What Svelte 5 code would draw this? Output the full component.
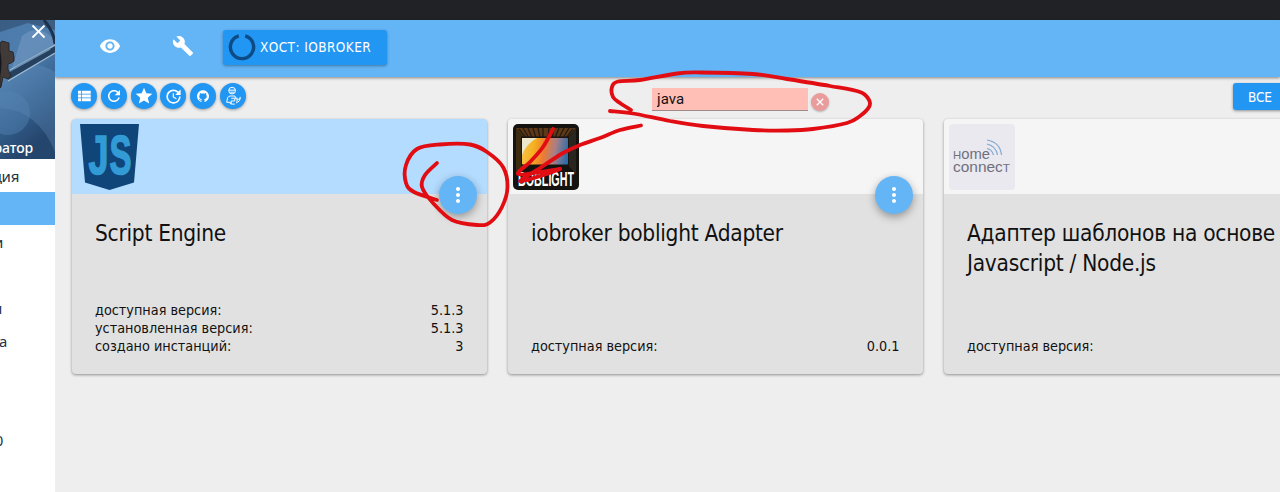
<script>
  let filter = 'java';

  const menu = [
    { label: 'ция', edge: 19 },
    { label: '', edge: 0, active: true },
    { label: 'и', edge: 3 },
    { label: '', edge: 0 },
    { label: 'и', edge: 2 },
    { label: 'а', edge: 7 },
    { label: '', edge: 0 },
    { label: '', edge: 0 },
    { label: '0', edge: 3 }
  ];

  const tools = [
    { name: 'list', size: 18, path: 'M4 14h4v-4H4v4zm0 5h4v-4H4v4zM4 9h4V5H4v4zm5 5h12v-4H9v4zm0 5h12v-4H9v4zM9 5v4h12V5H9z' },
    { name: 'refresh', size: 18, path: 'M17.65 6.35C16.2 4.9 14.21 4 12 4c-4.42 0-7.99 3.58-7.99 8s3.57 8 7.99 8c3.73 0 6.84-2.55 7.73-6h-2.08c-.82 2.33-3.04 4-5.65 4-3.31 0-6-2.69-6-6s2.69-6 6-6c1.66 0 3.14.69 4.22 1.78L13 11h7V4l-2.35 2.35z' },
    { name: 'star', size: 20, path: 'M12 17.27L18.18 21l-1.64-7.03L22 9.24l-7.19-.61L12 2 9.19 8.63 2 9.24l5.46 4.73L5.82 21z' },
    { name: 'update', size: 19, path: 'M21 10.12h-6.78l2.74-2.82c-2.73-2.7-7.15-2.8-9.88-.1-2.73 2.71-2.73 7.08 0 9.79s7.15 2.71 9.88 0C18.32 15.65 19 14.08 19 12.1h2c0 1.98-.88 4.55-2.64 6.29-3.51 3.48-9.21 3.48-12.72 0-3.5-3.47-3.53-9.11-.02-12.58s9.14-3.47 12.65 0L21 3v7.12zM12.5 8v4.25l3.5 2.08-.72 1.21L11 13V8h1.5z' },
    { name: 'github', size: 12, path: 'M12 .5C5.4.5 0 5.8 0 12.5c0 5.3 3.4 9.8 8.2 11.4.6.1.8-.3.8-.6v-2.2c-3.3.7-4-1.6-4-1.6-.6-1.4-1.4-1.8-1.4-1.8 1.5-.3 2 .8 2.6 1.5.7 1 1.8 1 2.8.6.1-.7.4-1.2.8-1.6-3-.4-5.3-1.8-5.3-5.8 0-1.3.5-2.3 1.2-3.1-.3-.9-.3-2 .1-3.1 1 0 2.3.5 3.3 1.2 1.9-.5 3.9-.5 5.8 0 1-.7 2.3-1.2 3.3-1.2.4 1.1.4 2.2.1 3.1.8.8 1.2 1.9 1.2 3.1 0 4-2.3 5.4-5.3 5.8.5.4.8 1.2.8 2.3v2.8c0 .3.2.7.8.6C20.6 22.3 24 17.8 24 12.5 24 5.800 18.6.5 12 .5z' }
  ];

  const adapters = [
    {
      logo: 'js', title: 'Script Engine', installed: true,
      info: [['доступная версия:', '5.1.3'], ['установленная версия:', '5.1.3'], ['создано инстанций:', '3']]
    },
    { logo: 'boblight', title: 'iobroker boblight Adapter', info: [['доступная версия:', '0.0.1']] },
    { logo: 'home', title: 'Адаптер шаблонов на основе Javascript / Node.js', info: [['доступная версия:', '']] }
  ];

  const strokes = [
    [[631, 110], [620, 103], [613, 97], [612, 87], [618, 81.5], [640, 80], [677, 73.5], [700, 72.5], [753, 74], [787, 79], [830, 86], [860, 92], [869, 100], [869, 107], [860, 116], [847, 123], [813, 129], [787, 130.5], [753, 130], [703, 126], [670, 121], [633, 113.5], [610, 111]],
    [[641, 125.5], [620, 130], [600, 138], [580, 145], [563, 153], [540, 168], [520, 181], [540, 176], [560, 169]],
    [[553, 129], [543, 147], [531, 161], [518, 174], [540, 172], [560, 169]],
    [[437, 163], [425, 175], [422, 187], [433, 203], [452, 220], [477, 225], [490, 222.5], [502, 207], [507.5, 187], [503, 167], [487, 152], [470, 144.5], [440, 144.5], [417, 149], [406, 165], [406, 183], [414, 192], [437, 200]]
  ];

  // Catmull-Rom spline through all points
  function curve(pts) {
    let d = `M${pts[0]}`;
    for (let i = 0; i < pts.length - 1; i++) {
      const a = pts[i - 1] || pts[i];
      const b = pts[i];
      const c = pts[i + 1];
      const e = pts[i + 2] || c;
      d += `C${b[0] + (c[0] - a[0]) / 6},${b[1] + (c[1] - a[1]) / 6} ${c[0] - (e[0] - b[0]) / 6},${c[1] - (e[1] - b[1]) / 6} ${c}`;
    }
    return d;
  }
</script>

<div class="app">
  <div class="topbar"></div>

  <div class="content">
    <aside>
      <div class="profile">
        <svg class="photo" viewBox="0 0 55 139">
          <defs>
            <linearGradient id="sky" x1="0" y1="0" x2="0.3" y2="1">
              <stop offset="0" stop-color="#4c7bab" />
              <stop offset=".35" stop-color="#4e7eae" />
              <stop offset=".7" stop-color="#35618e" />
              <stop offset="1" stop-color="#24456c" />
            </linearGradient>
          </defs>
          <rect width="55" height="139" fill="url(#sky)" />
          <path d="M0 0h55v10L28 3 0 12z" fill="#28405d" opacity=".5" />
          <path d="M22 16Q38 2 55 20v14L12 48z" fill="#6d96bd" opacity=".7" />
          <path d="M0 58Q27 34 55 52v80Q38 90 0 88z" fill="#6995c2" opacity=".3" />
          <circle cx="8" cy="93" r="22" fill="#5583b3" opacity=".45" />
          <path d="M10 52L55 26v7L8 60z" fill="#26415f" />
          <path d="M10 50L55 25M8 61l47-28" stroke="#9fbbd2" stroke-width="1.2" />
          <path d="M15 48l35-19" stroke="#6f91b0" stroke-width="1.5" />
          <path d="M44 0Q54 12 55 24" stroke="#1d324d" stroke-width="3" fill="none" />
          <path d="M0 23l2-2 7 2v8l4 1 1 5v4l-3 2-3 1 0 6 3 5-3 4-5-2-2 10-1 1z" fill="#413a38" stroke="#2a282b" />
          <path d="M0 31q3 12 0 25z" fill="#15171c" />
        </svg>
        <svg class="close" viewBox="0 0 24 24"><path d="M19 6.41L17.59 5 12 10.59 6.41 5 5 6.41 10.59 12 5 17.59 6.41 19 12 13.41 17.59 19 19 17.59 13.41 12z" /></svg>
        <span class="user">ратор</span>
      </div>
      <nav>
        {#each menu as item}
          <div class="item" class:active={item.active}>
            <span style:width="{item.edge}px">{item.label}</span>
          </div>
        {/each}
      </nav>
    </aside>

    <main>
      <header>
        <svg class="eye" viewBox="0 0 24 24"><path d="M12 4.5C7 4.5 2.73 7.61 1 12c1.73 4.39 6 7.5 11 7.5s9.27-3.11 11-7.5c-1.73-4.39-6-7.5-11-7.5zM12 17c-2.76 0-5-2.24-5-5s2.24-5 5-5 5 2.24 5 5-2.24 5-5 5zm0-8c-1.66 0-3 1.34-3 3s1.34 3 3 3 3-1.34 3-3-1.34-3-3-3z" /></svg>
        <svg class="wrench" viewBox="0 0 24 24"><path d="M22.7 19l-9.1-9.1c.9-2.3.4-5-1.5-6.9-2-2-5-2.4-7.4-1.3L9 6 6 9 1.6 4.7C.4 7.1.9 10.1 2.9 12.1c1.9 1.9 4.6 2.4 6.9 1.5l9.1 9.1c.4.4 1 .4 1.4 0l2.3-2.3c.5-.4.5-1.1.1-1.4z" /></svg>
        <button class="host">
          <svg viewBox="0 0 28 28"><path d="M10.8 2.9A11.6 11.6 0 1 0 17.2 2.9" fill="none" stroke="#0d4b87" stroke-width="3.4" /></svg>
          <span>ХОСТ: IOBROKER</span>
        </button>
      </header>

      <div class="toolbar">
        <div class="tools">
          {#each tools as tool}
            <button class="round" aria-label={tool.name}>
              <svg viewBox="0 0 24 24" width={tool.size} height={tool.size}><path d={tool.path} /></svg>
            </button>
          {/each}
          <button class="round" aria-label="expert">
            <svg class="expert" viewBox="0 0 20 22" width="18" height="20">
              <circle cx="9" cy="5" r="3.7" />
              <path d="M5 4.5h8M7 6.8h4M3 18h4v2M3 18l1-5q1-2 3-2h5l1 3M8 13.5h4v3H8v3.5h4M14 19l1-5q3 2 3-2M14 15l-1-3M15 18q3-1 3-5" />
            </svg>
          </button>
        </div>
        <div class="search">
          <input type="text" aria-label="filter" bind:value={filter}>
          <button class="clear" aria-label="clear" on:click={() => (filter = '')}>
            <svg viewBox="0 0 18 18"><path d="M5.8 5.8l6.4 6.4M12.2 5.8l-6.4 6.4" /></svg>
          </button>
        </div>
        <button class="all">ВСЕ</button>
      </div>

      <div class="cards">
        {#each adapters as adapter}
          <section class="card" class:installed={adapter.installed}>
            <div class="head">
              {#if adapter.logo === 'js'}
                <svg class="logo" viewBox="0 0 66 66">
                  <path d="M3 0h59l-5 58.5L32.5 66 8 58.5z" fill="#10457a" />
                  <g class="js">
                    <text transform="translate(11.5 50) scale(1 1.34)" textLength="20" lengthAdjust="spacingAndGlyphs">J</text>
                    <text transform="translate(32.5 50) scale(1 1.34)" textLength="22" lengthAdjust="spacingAndGlyphs">S</text>
                  </g>
                </svg>
              {:else if adapter.logo === 'boblight'}
                <svg class="logo" viewBox="0 0 66 66">
                  <defs>
                    <linearGradient id="screen" x1="0" y1="0.4" x2="1" y2="0.5">
                      <stop offset="0" stop-color="#f7c34a" />
                      <stop offset=".25" stop-color="#f5b01f" />
                      <stop offset=".48" stop-color="#ee7a32" />
                      <stop offset=".72" stop-color="#a77f88" />
                      <stop offset="1" stop-color="#2c6ca8" />
                    </linearGradient>
                  </defs>
                  <rect width="66" height="66" rx="5" fill="#15130f" />
                  <path d="M3 4h60L53 15H12z" fill="#5d3917" />
                  <path d="M3 4l9 11v25L3 50z" fill="#3b2c10" />
                  <path d="M63 4L54 15v25l9 10z" fill="#29251f" />
                  <path d="M6 5l7 9M10 4l6 10M15 4l4 10M20 4l3 10M25 4l2 10M30 4v10M36 4l-1 10M41 4l-2 10M46 4l-4 10M51 4l-5 10M56 4l-6 10M60 5l-7 9" stroke="#241b12" stroke-width="1.3" />
                  <path d="M8 12.5h48v29H8z" fill="#191511" />
                  <rect x="9" y="14" width="46" height="26.5" rx="1" fill="url(#screen)" />
                  <path d="M9 14h15q-11 6-15 17z" fill="#eaf0e5" opacity=".85" />
                  <text class="boblight" x="5" y="62" textLength="56" lengthAdjust="spacingAndGlyphs">BOBLIGHT</text>
                </svg>
              {:else}
                <svg class="logo" viewBox="0 0 66 66">
                  <rect width="66" height="66" rx="4" fill="#e9e9ef" />
                  <g class="home">
                    <text x="4" y="34.5" textLength="37" lengthAdjust="spacingAndGlyphs"><tspan class="small">H</tspan>ome</text>
                    <text x="4" y="47.5" textLength="57" lengthAdjust="spacingAndGlyphs">connec<tspan class="small">T</tspan></text>
                  </g>
                  <path d="M38 16q13 2 14.5 15M38 20q9 2 10.5 11M38 24.5q5 1 6.5 6.5" fill="none" stroke="#82a9d0" stroke-width="1.2" />
                </svg>
              {/if}
              <button class="fab" aria-label="menu">
                <svg viewBox="0 0 24 24"><path d="M12 8c1.1 0 2-.9 2-2s-.9-2-2-2-2 .9-2 2 .9 2 2 2zm0 2c-1.1 0-2 .9-2 2s.9 2 2 2 2-.9 2-2-.9-2-2-2zm0 6c-1.1 0-2 .9-2 2s.9 2 2 2 2-.9 2-2-.9-2-2-2z" /></svg>
              </button>
            </div>
            <div class="body">
              <h2>{adapter.title}</h2>
              <div class="info">
                {#each adapter.info as [name, value]}
                  <div class="row"><span>{name}</span><span>{value}</span></div>
                {/each}
              </div>
            </div>
          </section>
        {/each}
      </div>
    </main>
  </div>

  <svg class="marker" viewBox="0 0 1280 492">
    {#each strokes as points}
      <path d={curve(points)} />
    {/each}
  </svg>
</div>

<style>
  :global(body) {
    margin: 0;
    overflow: hidden;
  }

  .app {
    position: relative;
    width: 1280px;
    height: 492px;
    overflow: hidden;
    background: #eee;
    font-family: Tahoma, "DejaVu Sans Condensed", "DejaVu Sans", sans-serif;
    color: #111;
  }

  button {
    border: 0;
    padding: 0;
    font-family: inherit;
    color: #fff;
    background: #2196f3;
  }

  svg {
    display: block;
    flex: none;
    fill: #fff;
  }

  .topbar {
    height: 20px;
    background: #212225;
  }

  .content {
    display: flex;
    height: 472px;
  }

  aside {
    flex: none;
    width: 55px;
    overflow: hidden;
    background: #fff;
  }

  .profile {
    position: relative;
    height: 139px;
  }

  .photo {
    width: 55px;
    height: 139px;
  }

  .close {
    position: absolute;
    top: 0;
    right: 5px;
    width: 23px;
    height: 23px;
  }

  .user {
    position: absolute;
    right: 22px;
    bottom: 1px;
    font: 500 14px "Noto Sans", sans-serif;
    line-height: 20px;
    letter-spacing: -.1px;
    color: #fff;
  }

  .item {
    display: flex;
    align-items: center;
    height: 33px;
    font: 15px "Noto Sans", sans-serif;
    color: #243447;
  }

  .item span {
    display: flex;
    justify-content: flex-end;
    letter-spacing: -.3px;
  }

  .item.active {
    background: #64b5f6;
  }

  main {
    flex: none;
    display: flex;
    flex-direction: column;
    width: 1225px;
  }

  header {
    display: flex;
    align-items: center;
    box-sizing: border-box;
    height: 57px;
    padding: 0 0 5px 44px;
    background: #64b5f6;
    box-shadow: 0 1px 3px rgba(0,0,0,.45);
  }

  .eye {
    width: 22px;
    height: 22px;
  }

  .wrench {
    width: 22px;
    height: 22px;
    margin-left: 51px;
  }

  .host {
    display: flex;
    align-items: center;
    width: 164px;
    height: 35px;
    margin: 2px 0 0 29px;
    padding-left: 5px;
    border-radius: 3px;
    font-size: 13.5px;
    letter-spacing: .42px;
    box-shadow: 0 1px 3px rgba(0,0,0,.35);
  }

  .host svg {
    width: 28px;
    height: 28px;
    margin-right: 4px;
  }

  .host span {
    white-space: nowrap;
  }

  .toolbar {
    display: flex;
    height: 42px;
    padding-left: 16px;
  }

  .tools {
    flex: none;
    display: flex;
    gap: 3.8px;
    width: 581px;
    padding-top: 6px;
  }

  .round {
    display: flex;
    align-items: center;
    justify-content: center;
    width: 26px;
    height: 26px;
    border-radius: 50%;
    box-shadow: 0 1px 3px rgba(0,0,0,.35);
  }

  .expert {
    fill: none;
    stroke: #fff;
    stroke-width: 1.1;
  }

  .search {
    flex: none;
    display: flex;
    padding-top: 11px;
    width: 581px;
  }

  input {
    box-sizing: border-box;
    width: 156px;
    height: 23px;
    padding: 0 5px;
    border: 0;
    border-bottom: 1px solid #9e8b8b;
    border-radius: 0;
    font: 15px Roboto, sans-serif;
    letter-spacing: .1px;
    color: #111;
    background: #ffbfb7;
    outline: none;
  }

  .clear {
    width: 18px;
    height: 18px;
    margin: 5px 0 0 3px;
    border-radius: 50%;
    background: #ea9c9c;
    box-shadow: 0 1px 2px rgba(0,0,0,.25);
  }

  .clear svg {
    width: 18px;
    height: 18px;
    stroke: #fff;
    stroke-width: 1.3;
  }

  .all {
    flex: none;
    width: 60px;
    height: 27px;
    margin-top: 6px;
    padding-left: 15px;
    border-radius: 3px;
    font-size: 13.5px;
    text-align: left;
    letter-spacing: -.3px;
    box-shadow: 0 1px 3px rgba(0,0,0,.4);
  }

  .cards {
    display: flex;
    gap: 21.5px;
    padding-left: 17px;
  }

  .card {
    flex: none;
    width: 414.5px;
    height: 255px;
    border-radius: 4px;
    background: #e1e1e1;
    box-shadow: 0 1px 3px rgba(0,0,0,.4);
  }

  .head {
    position: relative;
    box-sizing: border-box;
    height: 75px;
    padding: 5px;
    border-radius: 4px 4px 0 0;
    background: #f5f5f5;
  }

  .installed .head {
    background: #b3dcff;
  }

  .logo {
    width: 66px;
    height: 66px;
  }

  .js {
    font: bold 41px "Liberation Sans Narrow", "Liberation Sans", sans-serif;
    fill: #329bd6;
    stroke: #329bd6;
    stroke-width: 1.2;
  }

  .boblight {
    font: bold 20px "Liberation Sans Narrow", "Liberation Sans", sans-serif;
  }

  .home {
    font: 15px "Liberation Sans", sans-serif;
    fill: #70707c;
  }

  .small {
    font-size: 11.5px;
  }

  .fab {
    position: absolute;
    right: 10px;
    bottom: -20px;
    display: flex;
    align-items: center;
    justify-content: center;
    width: 38px;
    height: 38px;
    border-radius: 50%;
    background: #64b5f6;
    box-shadow: 0 3px 8px rgba(0,0,0,.35);
  }

  .fab svg {
    width: 24px;
    height: 24px;
  }

  .body {
    display: flex;
    flex-direction: column;
    justify-content: space-between;
    box-sizing: border-box;
    height: 180px;
    padding: 24px 23px 19px;
  }

  h2 {
    width: 340px;
    margin: 0;
    font-size: 22.5px;
    font-weight: 400;
    line-height: 30px;
    letter-spacing: -.28px;
  }

  .row {
    display: flex;
    justify-content: space-between;
    height: 18px;
    font-size: 14.3px;
    line-height: 18px;
  }

  .marker {
    position: absolute;
    top: 0;
    left: 0;
    width: 1280px;
    height: 492px;
    pointer-events: none;
  }

  .marker path {
    fill: none;
    stroke: #e20d12;
    stroke-width: 3.8;
    stroke-linecap: round;
    stroke-linejoin: round;
  }
</style>
